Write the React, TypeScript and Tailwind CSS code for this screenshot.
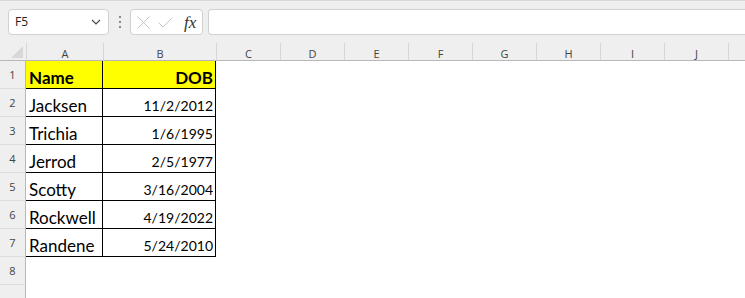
import React from "react";

const rows = [
  { name: "Name", dob: "DOB", head: true },
  { name: "Jacksen", dob: "11/2/2012" },
  { name: "Trichia", dob: "1/6/1995" },
  { name: "Jerrod", dob: "2/5/1977" },
  { name: "Scotty", dob: "3/16/2004" },
  { name: "Rockwell", dob: "4/19/2022" },
  { name: "Randene", dob: "5/24/2010" },
];

const extraCols = ["C", "D", "E", "F", "G", "H", "I", "J", ""];

function NameBox() {
  return (
    <div className="flex h-[26px] w-[101px] items-center justify-between rounded-[4px] border border-[#d1d1d1] bg-white pl-[6px] pr-[7px]">
      <span className="text-[12px] text-[#222]">F5</span>
      <svg width="10" height="6" viewBox="0 0 10 6" fill="none">
        <path d="M1 1l4 4 4-4" stroke="#444" strokeWidth="1.1" />
      </svg>
    </div>
  );
}

function FxBox() {
  return (
    <div className="flex h-[26px] w-[73px] items-center rounded-[4px] border border-[#d1d1d1] bg-white pl-[6px]">
      <svg width="13" height="13" viewBox="0 0 13 13" fill="none">
        <path d="M0.5 0.5l12 12M12.5 0.5l-12 12" stroke="#c4c4c4" strokeWidth="1" />
      </svg>
      <svg className="ml-[8px]" width="15" height="11" viewBox="0 0 15 11" fill="none">
        <path d="M0.5 5.5l4.5 4.5 9.5-9.5" stroke="#c4c4c4" strokeWidth="1" />
      </svg>
      <span className="ml-[11px] font-['Liberation_Serif',serif] text-[17px] italic leading-none text-[#333]">fx</span>
    </div>
  );
}

function Toolbar() {
  return (
    <div className="h-[43px] border-t border-[#d8d8d8] bg-[#efefef] pl-[8px] pt-[8px]">
      <div className="flex items-start">
        <NameBox />
        <div className="flex h-[26px] w-[21px] flex-col items-center justify-center gap-[3px]">
          <span className="h-[2px] w-[2px] bg-[#8a8a8a]" />
          <span className="h-[2px] w-[2px] bg-[#8a8a8a]" />
          <span className="h-[2px] w-[2px] bg-[#8a8a8a]" />
        </div>
        <FxBox />
        <div className="ml-[5px] h-[26px] flex-1 rounded-l-[4px] border border-r-0 border-[#d1d1d1] bg-white" />
      </div>
    </div>
  );
}

function RowHeader({ label }: { label?: number }) {
  return (
    <div className="flex h-[28px] items-center justify-center border-b border-r border-b-[#dcdcdc] border-r-[#b7b7b7] bg-[#efefef] pt-[1px] text-[11px] text-[#444]">
      {label}
    </div>
  );
}

export default function App() {
  return (
    <div className="h-[298px] w-[745px] overflow-hidden bg-white font-['Open_Sans',sans-serif]">
      <Toolbar />
      <div className="grid grid-cols-[26px_77px_113px_repeat(9,64px)]">
        {/* column headers */}
        <div className="relative h-[18px] border-b border-[#b7b7b7] bg-[#efefef]">
          <svg className="absolute bottom-[2px] right-[3px]" width="12" height="12" viewBox="0 0 12 12">
            <path d="M12 0v12H0z" fill="#d8d8d8" />
          </svg>
        </div>
        {["A", "B", ...extraCols].map((c, i) => (
          <div
            key={i}
            className="flex h-[18px] items-end justify-center border-b border-l border-b-[#b7b7b7] border-l-[#d6d6d6] bg-[#efefef] pb-[1px] text-[11px] leading-none text-[#444]"
          >
            {c}
          </div>
        ))}

        {/* data rows */}
        {rows.map((r, i) => (
          <React.Fragment key={i}>
            <RowHeader label={i + 1} />
            <div
              className={`flex h-[28px] items-end border-b border-r border-black pb-[2px] pl-[3px] font-['Lato',sans-serif] text-[17px] leading-none text-black ${
                r.head ? "bg-[#ffff00] font-bold" : ""
              }`}
            >
              {r.name}
            </div>
            <div
              className={`flex h-[28px] items-end justify-end border-b border-r border-black pr-[2px] font-['Lato',sans-serif] leading-none text-black ${
                r.head ? "bg-[#ffff00] pb-[2px] text-[17px] font-bold" : "pb-[3px] text-[14px]"
              }`}
            >
              {r.dob}
            </div>
            <div className="col-span-9 h-[28px]" />
          </React.Fragment>
        ))}

        <RowHeader label={8} />
        <div className="col-span-11 h-[28px]" />
        <RowHeader />
        <div className="col-span-11 h-[28px]" />
      </div>
    </div>
  );
}
